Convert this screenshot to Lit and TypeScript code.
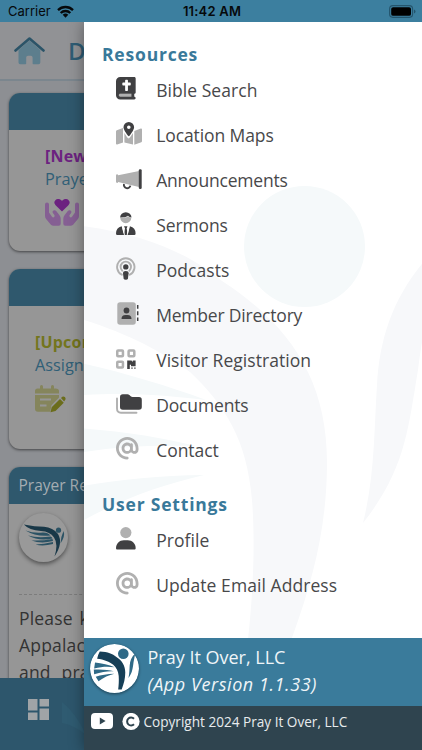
import { LitElement, html, css, svg } from "lit";
import { customElement } from "lit/decorators.js";

const GREY = "#b0b0b0";
const DARK = "#404042";

const AT = svg`<path transform="scale(.0439)" fill=${GREY} d="M256 64C150 64 64 150 64 256s86 192 192 192c17.700 0 32 14.300 32 32s-14.300 32-32 32C114.600 512 0 397.400 0 256S114.600 0 256 0S512 114.600 512 256v32c0 53-43 96-96 96c-29.300 0-55.600-13.200-73.200-33.900C320 371.100 289.500 384 256 384c-70.700 0-128-57.300-128-128s57.300-128 128-128c27.900 0 53.700 8.900 74.700 24.100c5.700-5 13.100-8.100 21.300-8.100c17.700 0 32 14.300 32 32v112c0 17.700 14.300 32 32 32s32-14.300 32-32V256c0-106-86-192-192-192zm64 192a64 64 0 1 0 -128 0 64 64 0 1 0 128 0z"/>`;

const ICONS = {
  bible: svg`<path d="M2 16.500h15.500v4H3z" fill=${GREY}/><path transform="scale(.0439)" fill=${DARK} d="M96 0C43 0 0 43 0 96V416c0 53 43 96 96 96H416c17.700 0 32-14.300 32-32s-14.300-32-32-32V384c17.700 0 32-14.300 32-32V32c0-17.700-14.300-32-32-32H96zm0 384H352v64H96c-17.700 0-32-14.300-32-32s14.300-32 32-32zM208 80c0-8.800 7.200-16 16-16h32c8.800 0 16 7.200 16 16v48h48c8.800 0 16 7.200 16 16v32c0 8.800-7.200 16-16 16H272V304c0 8.800-7.200 16-16 16H224c-8.800 0-16-7.200-16-16V192H160c-8.800 0-16-7.200-16-16V144c0-8.800 7.200-16 16-16h48V80z"/>`,
  map: svg`<path fill=${GREY} d="M0 9.500Q0 8.700 .8 8.300L7 6v14.500L1.200 22.500Q0 22.700 0 21.700zM8.400 11l2.700 4.300q1.500 2.200 3 0L17 11v11.400l-8.600-2zM18.300 9.100 24.800 6.600Q26 6.400 26 7.500V19.300Q26 20 25.300 20.300L18.300 22.700z"/><path fill=${DARK} fill-rule="evenodd" d="M12.800 0a5.300 5.300 0 0 1 5.300 5.300c0 2.500-3 6.500-4.600 8.500q-.7.700-1.400 0C10.500 11.800 7.500 7.800 7.500 5.300A5.300 5.300 0 0 1 12.800 0zm0 3.500a1.800 1.800 0 1 0 0 3.600 1.800 1.800 0 0 0 0-3.600z"/>`,
  horn: svg`<path d="M8 17a3.300 3.300 0 1 0 6.400 1.600" fill="none" stroke=${DARK} stroke-width="1.900"/><path fill=${GREY} d="M0 8.400Q0 7.300 1.100 7.300 1.900 7.300 2.200 8.300L23 4v16L2.200 15q-.3.900-1.100.900Q0 15.900 0 14.800z"/><rect x="22.800" y="2.300" width="2.900" height="19.600" rx="1.200" fill=${DARK}/>`,
  pastor: svg`<path fill=${GREY} d="M4.300 5.700Q10 6.500 12 4.300q1.400 1.200 3.300 1.400a5.500 5.500 0 0 1-11 0z"/><path fill=${DARK} d="M4.100 5.500a5.700 5.200 0 0 1 11.400 0Q13.300 5.400 12 3.700 9.500 5.800 4.100 5.500zM0 21.500Q0 15.600 5.700 14.200L7.600 21.700 9 16.500 8 14.300h3.600l-1 2.200L12 21.700l1.900-7.500q5.700 1.400 5.700 7.300Q19.600 23 18.300 23H1.300Q0 23 0 21.500z"/><path fill="#fff" d="M6 14.200 8 23h.8L8 14.300zM13.500 14.200 11.600 23h-.8l.9-8.700z"/>`,
  podcast: svg`<g fill="none" stroke=${GREY} stroke-width="1.900" stroke-linecap="round"><path d="M5.800 17.700a8.700 8.700 0 1 1 8 0"/><path d="M6.300 13.700a5.200 5.200 0 1 1 7 0"/></g><circle cx="9.800" cy="9.900" r="2.700" fill=${DARK}/><path fill=${DARK} d="M7 16.200Q7 14 9.800 14t2.800 2.200L12 21.200q-.3 1.500-2.200 1.500t-2.200-1.500z"/>`,
  directory: svg`<rect x="1.300" y=".2" width="18.500" height="22.600" rx="2.800" fill=${GREY}/><circle cx="10.500" cy="8.500" r="2.900" fill=${DARK}/><path fill=${DARK} d="M5.500 17q0-4 4-4h2q4 0 4 4z"/><path d="M21.700 3v3.800M21.700 9.300v4M21.700 15.500v3.600" stroke=${DARK} stroke-width="1.500"/>`,
  qr: svg`<g fill="none" stroke=${GREY} stroke-width="2.500"><rect x="1.250" y="3.500" width="5.700" height="5.700" rx=".8"/><rect x="12.600" y="3.500" width="5.700" height="5.700" rx=".8"/><rect x="1.250" y="14.800" width="5.700" height="5.700" rx=".8"/></g><path fill=${DARK} d="M11.200 13.500h4.300l1.300 1.500v-1.500h2.800v5.800h-4.600v-1.500h-1.200v4.100h-2.600zM15.300 20.400h1.400v1.400h-1.400zM18.200 20.400h1.400v1.400h-1.400z"/>`,
  folder: svg`<path d="M1 6.500v10q0 4.200 4 4.200h15.500" fill="none" stroke=${GREY} stroke-width="1.900" stroke-linecap="round"/><path fill=${DARK} d="M4 5q0-2.800 2.800-2.800h4.700q1.100 0 1.900.8l1.300 1.300q.8.800 1.900.800H23q2.800 0 2.800 2.800V15q0 2.800-2.800 2.800H6.800Q4 17.800 4 15z"/>`,
  at: AT,
  user: svg`<g transform="scale(.0439)"><circle cx="224" cy="128" r="128" fill=${GREY}/><path fill=${DARK} d="M0 482.300C0 383.800 79.800 304 178.300 304h91.400C368.200 304 448 383.800 448 482.300c0 16.400-13.300 29.700-29.700 29.700H29.700C13.300 512 0 498.700 0 482.300z"/></g>`,
};

type Item = { icon: keyof typeof ICONS; label: string; track: number };

const RESOURCES: Item[] = [
  { icon: "bible", label: "Bible Search", track: 0.05 },
  { icon: "map", label: "Location Maps", track: -0.1 },
  { icon: "horn", label: "Announcements", track: -0.2 },
  { icon: "pastor", label: "Sermons", track: -0.1 },
  { icon: "podcast", label: "Podcasts", track: 0.05 },
  { icon: "directory", label: "Member Directory", track: -0.2 },
  { icon: "qr", label: "Visitor Registration", track: 0.04 },
  { icon: "folder", label: "Documents", track: -0.15 },
  { icon: "at", label: "Contact", track: -0.05 },
];
const SETTINGS: Item[] = [
  { icon: "user", label: "Profile", track: 0.05 },
  { icon: "at", label: "Update Email Address", track: 0.06 },
];

/* Figure with raised wing, shared by the drawer background and the badge. */
const figure = (arm: string, feather: string, leaf: string) => svg`
  <circle cx="304.500" cy="246.500" r="60.500" fill=${feather}/>
  <path fill=${arm} d="M36 222C130 226 185 250 222 281C290 325 327 380 327 462C327 530 312 585 286 654L246 656C252 610 256 550 252 500C247 440 225 405 190 372C150 342 84 312 6 304Q14 262 36 222z"/>
  <path fill=${leaf} d="M442 242C398 285 380 330 377 385C374 430 375 475 363 523C405 470 408 430 418 370C422 335 432 290 442 242z"/>
  <path fill=${feather} d="M-18 348C60 354 140 376 206 400C140 392 70 388-28 414zM-32 428C60 422 140 432 196 446C120 444 60 450-28 482zM-10 508C50 490 120 476 204 475C140 490 80 515 22 562z"/>`;

const HAND = "M0 5.500Q0 3.500 2 3.500T4 5.500v8l3 4.200q1 1.300 2.200.3 1-1-.1-2.400L7.800 13.900Q7 12.300 8.500 11.500t2.700.5l3.300 4.200q1.200 1.500 1.200 3.500v5q0 2-2 2H8.500q-1.500 0-2.600-1L1.300 20.200Q0 18.700 0 16.700z";

@customElement("app-root")
export class AppRoot extends LitElement {
  static styles = css`
    :host { display: block; width: 422px; height: 750px; overflow: hidden; position: relative;
      font-family: "Open Sans", "Noto Sans", sans-serif; color: #48484a; }
    * { box-sizing: border-box; }
    svg { display: block; flex: none; }
    .status { height: 22px; background: #3c7f9f; color: #06090b; display: grid; grid-template-columns: 1fr auto 1fr;
      align-items: center; padding: 0 6px 0 8px; font: 13px/22px Inter, sans-serif; }
    .carrier { display: flex; gap: 6px; align-items: center; }
    .clock { font-weight: 600; letter-spacing: .2px; }
    .battery { justify-self: end; }
    .page { height: 728px; display: flex; flex-direction: column; background: #8d8f93; }
    .top { height: 59px; flex: none; display: flex; align-items: center; padding-left: 14px; gap: 23px; border-bottom: 2px solid #7b868e;
      background: #919295; color: #2e5c74; font-size: 24px; font-weight: 600; }
    .feed { flex: 1; min-height: 0; overflow: hidden; padding: 12px 9px 0; display: flex; flex-direction: column; gap: 18px; }
    .card { flex: none; width: 404px; border-radius: 11px; background: #969696; overflow: hidden; box-shadow: 0 1px 3px #0008; }
    .bar { height: 37px; background: #2f586d; color: #a4adb2; font-size: 15.500px; line-height: 36px; padding-left: 9.500px; }
    .one { height: 158px; }
    .two { height: 180px; }
    .three { height: 260px; }
    .note { padding: 15px 0 0 36px; font-size: 16.300px; line-height: 23px; color: #305f77; }
    .two .note { padding: 25px 0 0 26px; }
    .note b { display: block; font-size: 16px; letter-spacing: .2px; }
    .note svg { margin-top: 8px; }
    .plum { color: #6c2280; }
    .olive { color: #73751d; }
    .avatar { width: 49px; height: 49px; border-radius: 50%; margin: 9px 0 0 10px; background: #999; box-shadow: 0 2px 4px #0007; }
    .rule { margin: 32px 10px 0; border-top: 1px dashed #7c7c7c; }
    .body { margin: 10px 10px 0; font-size: 17.500px; letter-spacing: .2px; line-height: 27px; color: #333; white-space: pre; }
    .wide { word-spacing: 2px; }
    .wider { word-spacing: 6px; }
    .tabs { height: 72px; flex: none; background: #2d566c; padding: 21px 28px; overflow: hidden; }
    .drawer { position: absolute; left: 84px; top: 22px; width: 338px; height: 728px; background: #fff; display: flex; flex-direction: column;
      box-shadow: 0 0 14px #0006; clip-path: inset(0 0 0 -30px); }
    .mark { position: absolute; left: 0; top: 0; }
    .menu { position: relative; height: 616px; padding-top: 1.500px; }
    h2 { margin: 0; height: 45px; padding: 18.700px 0 0 18px; font-size: 17.500px; line-height: 24px; font-weight: 700; color: #39799a; letter-spacing: .8px; }
    .item { height: 45px; display: flex; align-items: center; padding-left: 32px; gap: 12.200px; font-size: 17.500px; white-space: nowrap; }
    .item svg { margin-top: -4px; }
    .item span { margin-top: -1.500px; }
    .brand { position: relative; height: 68px; background: #3a7b9b; display: flex; gap: 9px; padding: 6px 0 0 5.500px; color: #eff5f8; font-size: 18px; line-height: 27px; }
    .brand svg { border-radius: 50%; box-shadow: 0 1px 3px #0007; }
    .brand p { margin: 0; }
    .version { font-style: italic; letter-spacing: .57px; }
    .legal { position: relative; height: 44px; background: #2f444f; display: flex; gap: 9px; padding: 7px 0 0 6.500px; color: #e7ebed; font-size: 13.600px; line-height: 17px; white-space: nowrap; }
    .legal span { margin-left: -5px; }
  `;

  private row = (it: Item) => html`<div class="item">
    <svg width="28" height="24" viewBox="0 0 28 24">${ICONS[it.icon]}</svg>
    <span style="letter-spacing:${it.track}px">${it.label}</span></div>`;

  render() {
    return html`
      <div class="status">
        <div class="carrier">Carrier
          <svg width="17" height="13" viewBox="0 0 17 13"><g fill="none" stroke="#06090b" stroke-width="2.300"><path d="M1 5.100a10.600 10.600 0 0 1 15 0"/><path d="M3.700 8a6.800 6.800 0 0 1 9.600 0"/></g><path fill="#06090b" d="M8.500 12.700 5.700 9.800a4 4 0 0 1 5.600 0z"/></svg>
        </div>
        <div class="clock">11:42 AM</div>
        <svg class="battery" width="27" height="13" viewBox="0 0 27 13"><rect x=".6" y=".6" width="23" height="11.800" rx="3.300" fill="none" stroke="#24556d" stroke-width="1.100"/><rect x="2.200" y="2.200" width="19.800" height="8.600" rx="1.900" fill="#000"/><path d="M25 4.500q1.500.6 1.500 2t-1.500 2z" fill="#24556d"/></svg>
      </div>
      <div class="page">
        <div class="top">
          <svg width="31" height="28" viewBox="0 0 31 28"><path fill="#5d7e8d" d="M15.500 3.500 4.500 13v12.500q0 1.700 1.700 1.700H11.500q.7 0 .7-.7v-6q0-1.800 1.800-1.800h2.800q1.800 0 1.800 1.800v6q0 .7.700.7h5.300q1.700 0 1.700-1.700V13z"/><path d="M1.500 13.500 15.500 1.600 29.500 13.500" fill="none" stroke="#2b5468" stroke-width="2.600" stroke-linecap="round" stroke-linejoin="round"/></svg>
          Dashboard
        </div>
        <div class="feed">
          <section class="card one"><div class="bar"></div>
            <div class="note"><b class="plum">[New]</b>Prayers
              <svg width="34" height="27" viewBox="0 0 34 27"><path fill="#6c2280" d="M17 12.500 10.600 6.200A3.700 3.700 0 0 1 10.600 1C12.500-.7 15.500-.3 17 2 18.500-.3 21.500-.7 23.400 1a3.700 3.700 0 0 1 0 5.200z"/><path fill="#855f93" d=${HAND}/><path transform="translate(34) scale(-1 1)" fill="#855f93" d=${HAND}/></svg>
            </div></section>
          <section class="card two"><div class="bar"></div>
            <div class="note"><b class="olive">[Upcoming]</b>Assignments
              <svg width="31" height="28" viewBox="0 0 31 28"><path fill="#85855c" fill-rule="evenodd" d="M5 1.500q0-1.500 1.500-1.500T8 1.500V3.500h8V1.500Q16 0 17.500 0T19 1.500V3.500h1.500Q24 3.500 24 6v2.500H0V6q0-2.500 2.500-2.500H5zM0 10h24v2.500l-7.500 7.800-1.300 6.500H3q-3 0-3-3zM5 13.500v2h11v-2zM5 19.500v2h6.500v-2z"/><path fill="#6b6d1c" d="M15.500 27.300l1.200-5L25 14l3.800 3.700-8.300 8.300zM26 13l1.300-1.200q1.300-.8 2.500.3 1.400 1.300.3 3l-1 1.300z"/></svg>
            </div></section>
          <section class="card three"><div class="bar">Prayer Requests</div>
            <div class="avatar"><svg width="49" height="49" viewBox="0 0 49 49"><path fill="#193848" d="M4.800 11.500Q16 13.800 25 13.800 34 14.500 39 21q5.500 9-3.500 22.500Q39.500 31 35 24.500 31 18.500 22 18 10 17 4.800 11.500z"/><path fill="#2b5264" d="M6.500 17.500Q15 20.500 24 19.500q5 .2 7.500 3Q17 24 6.500 17.500zM9 22.500q10 3 22.500 1 1.500.7 2 2Q20 28.500 9 22.500zM12.500 27.500q11 .5 21-1.500l.5 2Q22 31 12.500 27.500zM16.500 31.500q8-.5 17.500-2.500v2Q24 33.500 16.500 31.500zM44.500 18q2 5-3 12.500 0-6 3-12.500z"/><circle cx="39.500" cy="17.200" r="2.600" fill="#2b5264"/></svg></div>
            <div class="rule"></div>
            <div class="body"><div class="wide">Please keep the</div><div>Appalachian region</div><div class="wider">and prayers</div></div>
          </section>
        </div>
        <div class="tabs"><svg width="220" height="51" viewBox="0 0 220 51"><path fill="#2f5b71" d="M34 3Q48 14 58 36 46 26 34 24z"/><path fill="#a0a4a7" d="M0 0h9.500v11.500H0zM11.500 0H21v7.500h-9.500zM0 13.500h9.500V21H0zM11.500 9.500H21V21h-9.500z"/></svg></div>
      </div>
      <div class="drawer">
        <svg class="mark" width="338" height="616" viewBox="84 22 338 616">${figure("#f7f8fa", "#f5f9fa", "#f7f8fa")}</svg>
        <div class="menu">
          <h2>Resources</h2>${RESOURCES.map(this.row)}
          <h2>User Settings</h2>${SETTINGS.map(this.row)}
        </div>
        <div class="brand">
          <svg width="49" height="49" viewBox="0 0 49 49"><circle cx="24.500" cy="24.500" r="24.500" fill="#fff"/><g transform="translate(33.300 9.700) scale(.0877) translate(-304.500 -246.500)">${figure("#163f57", "#2f6a87", "#2f6a87")}</g></svg>
          <div><p>Pray It Over, LLC</p><p class="version">(App Version 1.1.33)</p></div>
        </div>
        <div class="legal">
          <svg width="22" height="16" viewBox="0 0 22 16"><path fill="#fff" fill-rule="evenodd" d="M4 0h14q4 0 4 4v8q0 4-4 4H4q-4 0-4-4V4q0-4 4-4zM8.800 4.600v6.800L14.600 8z"/></svg>
          <svg width="18" height="18" viewBox="0 0 18 18"><circle cx="9" cy="8.500" r="8.600" fill="#fff"/><path d="M12 5.700a4 4 0 1 0 0 5.600" fill="none" stroke="#2f444f" stroke-width="2"/></svg>
          <span>Copyright 2024 Pray It Over, LLC</span>
        </div>
      </div>`;
  }
}
